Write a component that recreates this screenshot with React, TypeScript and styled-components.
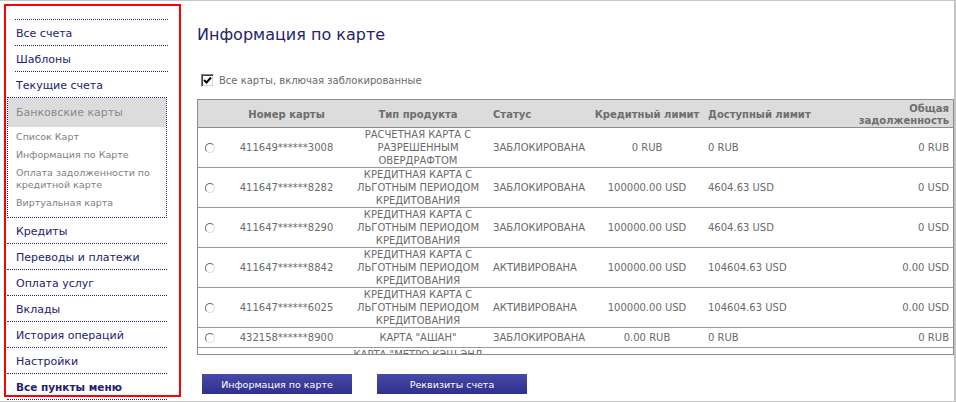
import styled, { createGlobalStyle } from 'styled-components';

const GlobalStyle = createGlobalStyle`
  html, body {
    margin: 0;
    padding: 0;
    background: #fff;
  }
  body {
    font-family: 'DejaVu Sans', Verdana, sans-serif;
  }
`;

interface CardRow {
  number: string;
  product: string;
  status: string;
  credit: string;
  available: string;
  debt: string;
}

const topItems = ['Все счета', 'Шаблоны', 'Текущие счета'];
const cardLinks = [
  'Список Карт',
  'Информация по Карте',
  'Оплата задолженности по\nкредитной карте',
  'Виртуальная карта',
];
const bottomItems = [
  'Кредиты',
  'Переводы и платежи',
  'Оплата услуг',
  'Вклады',
  'История операций',
  'Настройки',
];

const credit = 'КРЕДИТНАЯ КАРТА С\nЛЬГОТНЫМ ПЕРИОДОМ\nКРЕДИТОВАНИЯ';

const rows: CardRow[] = [
  {
    number: '411649******3008',
    product: 'РАСЧЕТНАЯ КАРТА С\nРАЗРЕШЕННЫМ\nОВЕРДРАФТОМ',
    status: 'ЗАБЛОКИРОВАНА',
    credit: '0 RUB',
    available: '0 RUB',
    debt: '0 RUB',
  },
  {
    number: '411647******8282',
    product: credit,
    status: 'ЗАБЛОКИРОВАНА',
    credit: '100000.00 USD',
    available: '4604.63 USD',
    debt: '0 USD',
  },
  {
    number: '411647******8290',
    product: credit,
    status: 'ЗАБЛОКИРОВАНА',
    credit: '100000.00 USD',
    available: '4604.63 USD',
    debt: '0 USD',
  },
  {
    number: '411647******8842',
    product: credit,
    status: 'АКТИВИРОВАНА',
    credit: '100000.00 USD',
    available: '104604.63 USD',
    debt: '0.00 USD',
  },
  {
    number: '411647******6025',
    product: credit,
    status: 'АКТИВИРОВАНА',
    credit: '100000.00 USD',
    available: '104604.63 USD',
    debt: '0.00 USD',
  },
  {
    number: '432158******8900',
    product: 'КАРТА "АШАН"',
    status: 'ЗАБЛОКИРОВАНА',
    credit: '0.00 RUB',
    available: '0 RUB',
    debt: '0 RUB',
  },
  {
    number: '427683******1154',
    product: 'КАРТА "МЕТРО КЭШ ЭНД\nКЕРРИ"',
    status: 'АКТИВИРОВАНА',
    credit: '0.00 RUB',
    available: '0 RUB',
    debt: '0 RUB',
  },
];

const App = () => {
  return (
    <>
      <GlobalStyle />
      <Frame>
        <Sidebar>
          {topItems.map((item) => (
            <TopItem key={item}>{item}</TopItem>
          ))}
          <CardsBox>
            <CardsHead>Банковские карты</CardsHead>
            {cardLinks.map((link) => (
              <SubItem key={link}>{link}</SubItem>
            ))}
          </CardsBox>
          {bottomItems.map((item) => (
            <MenuItem key={item}>{item}</MenuItem>
          ))}
          <MenuItem $bold>Все пункты меню</MenuItem>
        </Sidebar>

        <Main>
          <Title>Информация по карте</Title>
          <FilterRow>
            <CheckBox>
              <svg width='9' height='9' viewBox='0 0 9 9'>
                <path
                  d='M1 4 L3.5 6.5 L8 1.5'
                  fill='none'
                  stroke='#000'
                  strokeWidth='2'
                />
              </svg>
            </CheckBox>
            <FilterLabel>Все карты, включая заблокированные</FilterLabel>
          </FilterRow>

          <TableBox>
            <Table>
              <colgroup>
                <col style={{ width: 29 }} />
                <col style={{ width: 120 }} />
                <col style={{ width: 143 }} />
                <col style={{ width: 100 }} />
                <col style={{ width: 115 }} />
                <col style={{ width: 142 }} />
                <col />
              </colgroup>
              <thead>
                <tr>
                  <Th />
                  <Th $align='center'>Номер карты</Th>
                  <Th $align='center'>Тип продукта</Th>
                  <Th>Статус</Th>
                  <Th $align='center'>Кредитный лимит</Th>
                  <Th>Доступный лимит</Th>
                  <Th $align='right'>
                    Общая
                    <br />
                    задолженность
                  </Th>
                </tr>
              </thead>
              <tbody>
                {rows.map((row) => (
                  <tr key={row.number}>
                    <Td>
                      <Radio />
                    </Td>
                    <Td $align='center'>{row.number}</Td>
                    <Td $align='center'>{row.product}</Td>
                    <Td>{row.status}</Td>
                    <Td $align='center'>{row.credit}</Td>
                    <Td>{row.available}</Td>
                    <Td $align='right'>{row.debt}</Td>
                  </tr>
                ))}
              </tbody>
            </Table>
          </TableBox>

          <Actions>
            <ActionButton type='button'>Информация по карте</ActionButton>
            <ActionButton type='button'>Реквизиты счета</ActionButton>
          </Actions>
        </Main>
      </Frame>
    </>
  );
};

const Frame = styled.div`
  width: 956px;
  height: 402px;
  box-sizing: border-box;
  border-top: 1px solid #c4c4c4;
  border-right: 2px solid #c4c4c4;
  border-bottom: 1px solid #c4c4c4;
  display: flex;
  align-items: flex-start;
  overflow: hidden;
`;

const Sidebar = styled.nav`
  box-sizing: border-box;
  flex: 0 0 177px;
  height: 393px;
  margin: 3px 0 0 4px;
  padding-top: 13px;
  border: 2px solid #ff0000;
  display: flex;
  flex-direction: column;
`;

const TopItem = styled.div`
  margin-left: 9px;
  width: 152px;
  height: 23px;
  line-height: 23px;
  padding: 2px 0 0 1px;
  border-top: 1px dotted #2a2a6a;
  font-size: 11px;
  color: #22226e;
`;

const CardsBox = styled.div`
  margin-left: 1px;
  width: 160px;
  box-sizing: border-box;
  border: 1px dotted #2a2a6a;
  padding-bottom: 6px;
`;

const CardsHead = styled.div`
  height: 28px;
  line-height: 28px;
  padding: 1px 0 0 8px;
  background: #dcdcdc;
  font-size: 11px;
  color: #8a8a8a;
`;

const SubItem = styled.div`
  padding: 4px 0 2px 8px;
  line-height: 12px;
  font-size: 9.5px;
  color: #808080;
  white-space: pre-line;
`;

const MenuItem = styled.div<{ $bold?: boolean }>`
  flex: 0 0 auto;
  margin-left: 1px;
  width: 151px;
  height: 23px;
  line-height: 23px;
  padding: 2px 0 0 9px;
  border-bottom: 1px dotted #2a2a6a;
  font-size: ${(p) => (p.$bold ? '10.5px' : '11px')};
  font-weight: ${(p) => (p.$bold ? 'bold' : 'normal')};
  color: #22226e;
`;

const Main = styled.main`
  flex: 1;
  padding-left: 16px;
  display: flex;
  flex-direction: column;
`;

const Title = styled.h1`
  margin: 24px 0 0;
  height: 20px;
  line-height: 20px;
  font-size: 16px;
  font-weight: normal;
  color: #23236e;
`;

const FilterRow = styled.label`
  margin-top: 28px;
  height: 14px;
  display: flex;
  align-items: center;
  gap: 5px;
  padding-left: 4px;
`;

const CheckBox = styled.span`
  box-sizing: border-box;
  width: 13px;
  height: 13px;
  display: flex;
  align-items: center;
  justify-content: center;
  background: #fff;
  border: 1px solid;
  border-color: #808080 #ffffff #ffffff #808080;
  box-shadow: inset 1px 1px #404040, inset -1px -1px #d4d4d4;
`;

const FilterLabel = styled.span`
  font-size: 10px;
  color: #6a6a6a;
`;

const TableBox = styled.div`
  margin-top: 12px;
  box-sizing: border-box;
  width: 757px;
  height: 256px;
  border: 1px solid #8c8c8c;
  overflow: hidden;
`;

const Table = styled.table`
  width: 100%;
  table-layout: fixed;
  border-collapse: separate;
  border-spacing: 0;
`;

const Th = styled.th<{ $align?: 'left' | 'center' | 'right' }>`
  height: 23px;
  padding: 3px 4px 0 3px;
  background: #dcdcdc;
  border-bottom: 1px solid #8c8c8c;
  text-align: ${(p) => p.$align || 'left'};
  vertical-align: middle;
  line-height: 12px;
  font-size: 10px;
  font-weight: bold;
  color: #6e6e6e;
  white-space: nowrap;
`;

const Td = styled.td<{ $align?: 'left' | 'center' | 'right' }>`
  height: 19px;
  padding: 0 4px 0 3px;
  border-bottom: 1px solid #9a9a9a;
  text-align: ${(p) => p.$align || 'left'};
  vertical-align: middle;
  line-height: 13px;
  font-size: 10px;
  color: #6a6a6a;
  white-space: pre-line;
`;

const Radio = styled.span`
  display: block;
  box-sizing: border-box;
  margin-left: 4px;
  width: 10px;
  height: 10px;
  border-radius: 50%;
  border: 1px solid;
  border-color: #6a6a6a #dcdcdc #dcdcdc #6a6a6a;
  background: #fff;
`;

const Actions = styled.div`
  margin-top: 19px;
  padding-left: 5px;
  display: flex;
  gap: 25px;
`;

const ActionButton = styled.button`
  width: 150px;
  height: 20px;
  padding: 0;
  border: none;
  background: linear-gradient(#4848a8, #30308e);
  font-family: 'DejaVu Sans', Verdana, sans-serif;
  font-size: 9.5px;
  color: #fff;
  cursor: pointer;
`;

export default App;
